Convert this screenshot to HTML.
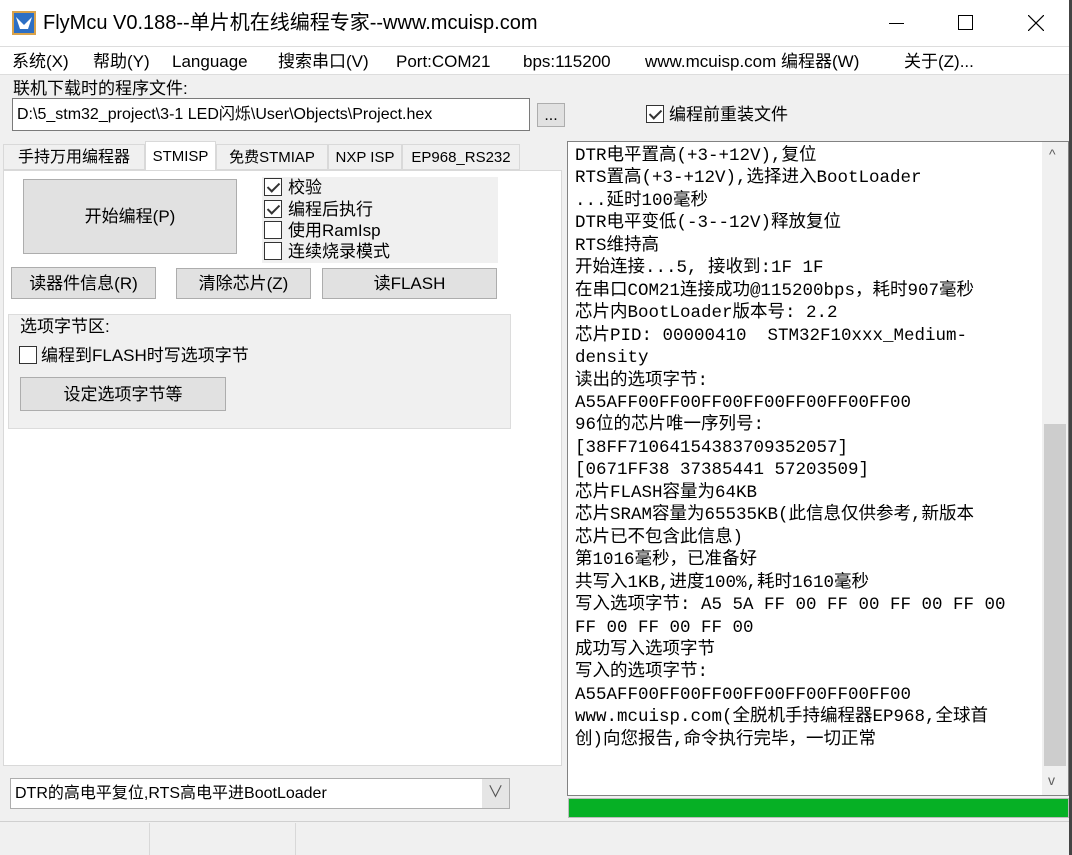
<!DOCTYPE html>
<html><head><meta charset="utf-8"><style>
*{margin:0;padding:0;box-sizing:border-box}
body{width:1072px;height:855px;overflow:hidden;background:#f0f0f0;font-family:"Liberation Sans","Noto Sans CJK SC",sans-serif;font-size:16px;color:#000;position:relative;line-height:21px}
.a{position:absolute;white-space:nowrap}
.btn{position:absolute;background:#e1e1e1;border:1px solid #adadad;display:flex;align-items:center;justify-content:center;font-size:16px;white-space:nowrap}
.cb{position:absolute;width:18px;height:18px;border:1px solid #333;background:#fff}
.ck::after{content:"";position:absolute;left:5px;top:1px;width:5px;height:10px;border:solid #333;border-width:0 2px 2px 0;transform:rotate(45deg)}
.log{font-family:"Liberation Mono","Noto Sans CJK SC",monospace;font-size:17.5px;line-height:22.45px;white-space:pre;color:#000}
.m{position:absolute;top:51px;font-size:17px;line-height:22px;height:22px;white-space:nowrap}
.tab{position:absolute;top:144px;height:26px;border:1px solid #d9d9d9;font-size:15px;padding-top:2px;text-align:center;white-space:nowrap;overflow:hidden}
</style></head><body>
<div class="a" style="left:0;top:0;width:1072px;height:47px;background:#fff;border-bottom:1px solid #ddd"></div>
<svg class="a" style="left:12px;top:11px" width="24" height="24"><rect x="0" y="0" width="24" height="24" fill="#d9a24a"/><rect x="2" y="2" width="20" height="20" fill="#2d6fc4"/><path d="M4 6 L12 14 L20 6 L16 18 L8 18 Z" fill="#fff"/></svg>
<div class="a" style="left:43px;top:11px;font-size:20px;line-height:24px">FlyMcu V0.188--单片机在线编程专家--www.mcuisp.com</div>
<div class="a" style="left:889px;top:23px;width:15px;height:1px;background:#000"></div>
<div class="a" style="left:958px;top:15px;width:15px;height:15px;border:1px solid #000"></div>
<svg class="a" style="left:1028px;top:15px" width="16" height="16"><path d="M0 0L16 16M16 0L0 16" stroke="#000" stroke-width="1.2"/></svg>
<div class="a" style="left:1069px;top:0;width:3px;height:855px;background:#444"></div>
<div class="a" style="left:0;top:47px;width:1069px;height:27px;background:#fff"></div>
<div class="m" style="left:12px">系统(X)</div>
<div class="m" style="left:93px">帮助(Y)</div>
<div class="m" style="left:172px">Language</div>
<div class="m" style="left:278px">搜索串口(V)</div>
<div class="m" style="left:396px">Port:COM21</div>
<div class="m" style="left:523px">bps:115200</div>
<div class="m" style="left:645px">www.mcuisp.com 编程器(W)</div>
<div class="m" style="left:904px">关于(Z)...</div>
<div class="a" style="left:0;top:74px;width:1069px;height:1px;background:#ddd"></div>
<div class="a" style="left:13px;top:78px;font-size:17px">联机下载时的程序文件:</div>
<div class="a" style="left:12px;top:98px;width:518px;height:33px;background:#fff;border:1px solid #7a7a7a;padding:5px 4px;font-size:16px">D:\5_stm32_project\3-1 LED闪烁\User\Objects\Project.hex</div>
<div class="btn" style="left:537px;top:103px;width:28px;height:24px">...</div>
<div class="cb ck" style="left:646px;top:105px"></div>
<div class="a" style="left:669px;top:104px;font-size:17px">编程前重装文件</div>
<!-- tabs -->
<div class="tab" style="left:3px;width:142px;font-size:16px">手持万用编程器</div>
<div class="tab" style="left:145px;top:141px;width:71px;height:30px;background:#fff;border-bottom:none;padding-top:4px">STMISP</div>
<div class="tab" style="left:216px;width:112px">免费STMIAP</div>
<div class="tab" style="left:328px;width:74px">NXP ISP</div>
<div class="tab" style="left:402px;width:118px">EP968_RS232</div>
<div class="a" style="left:3px;top:170px;width:559px;height:596px;background:#fff;border:1px solid #d9d9d9"></div>
<div class="btn" style="left:23px;top:179px;width:214px;height:75px;font-size:17px">开始编程(P)</div>
<div class="a" style="left:262px;top:177px;width:236px;height:86px;background:#f0f0f0"></div>
<div class="cb ck" style="left:264px;top:178px"></div><div class="a" style="left:288px;top:177px;font-size:17px">校验</div>
<div class="cb ck" style="left:264px;top:200px"></div><div class="a" style="left:288px;top:199px;font-size:17px">编程后执行</div>
<div class="cb" style="left:264px;top:221px"></div><div class="a" style="left:288px;top:220px;font-size:17px">使用RamIsp</div>
<div class="cb" style="left:264px;top:242px"></div><div class="a" style="left:288px;top:241px;font-size:17px">连续烧录模式</div>
<div class="btn" style="left:11px;top:267px;width:145px;height:32px;font-size:17px">读器件信息(R)</div>
<div class="btn" style="left:176px;top:268px;width:135px;height:31px;font-size:17px">清除芯片(Z)</div>
<div class="btn" style="left:322px;top:268px;width:175px;height:31px;font-size:17px">读FLASH</div>
<div class="a" style="left:8px;top:314px;width:503px;height:115px;background:#f0f0f0;border:1px solid #dcdcdc"></div>
<div class="a" style="left:20px;top:316px;font-size:17px">选项字节区:</div>
<div class="cb" style="left:19px;top:346px"></div><div class="a" style="left:41px;top:345px;font-size:17px">编程到FLASH时写选项字节</div>
<div class="btn" style="left:20px;top:377px;width:206px;height:34px;font-size:17px">设定选项字节等</div>
<div class="a" style="left:10px;top:778px;width:500px;height:31px;background:#fff;border:1px solid #adadad;padding:4px 4px;font-size:16px">DTR的高电平复位,RTS高电平进BootLoader</div>
<div class="a" style="left:482px;top:779px;width:27px;height:29px;background:#e5e5e5;text-align:center;color:#555;padding-top:3px">∨</div>
<!-- log -->
<div class="a" style="left:567px;top:141px;width:502px;height:655px;background:#fff;border:1px solid #828282"></div>
<div class="a log" style="left:575px;top:145px">DTR电平置高(+3-+12V),复位
RTS置高(+3-+12V),选择进入BootLoader
...延时100毫秒
DTR电平变低(-3--12V)释放复位
RTS维持高
开始连接...5, 接收到:1F 1F
在串口COM21连接成功@115200bps，耗时907毫秒
芯片内BootLoader版本号: 2.2
芯片PID: 00000410  STM32F10xxx_Medium-
density
读出的选项字节:
A55AFF00FF00FF00FF00FF00FF00FF00
96位的芯片唯一序列号:
[38FF71064154383709352057]
[0671FF38 37385441 57203509]
芯片FLASH容量为64KB
芯片SRAM容量为65535KB(此信息仅供参考,新版本
芯片已不包含此信息)
第1016毫秒，已准备好
共写入1KB,进度100%,耗时1610毫秒
写入选项字节: A5 5A FF 00 FF 00 FF 00 FF 00
FF 00 FF 00 FF 00
成功写入选项字节
写入的选项字节:
A55AFF00FF00FF00FF00FF00FF00FF00
www.mcuisp.com(全脱机手持编程器EP968,全球首
创)向您报告,命令执行完毕，一切正常</div>
<div class="a" style="left:1042px;top:142px;width:26px;height:653px;background:#f0f0f0"></div>
<div class="a" style="left:1044px;top:424px;width:22px;height:342px;background:#cdcdcd"></div>
<div class="a" style="left:1049px;top:144px;color:#606060;font-size:14px">^</div>
<div class="a" style="left:1048px;top:770px;color:#606060;font-size:14px">v</div>
<div class="a" style="left:568px;top:798px;width:501px;height:20px;background:#06b025;border:1px solid #bcbcbc"></div>
<div class="a" style="left:0;top:821px;width:1069px;height:1px;background:#d0d0d0"></div>
<div class="a" style="left:149px;top:823px;width:1px;height:32px;background:#d8d8d8"></div>
<div class="a" style="left:295px;top:823px;width:1px;height:32px;background:#d8d8d8"></div>
</body></html>
